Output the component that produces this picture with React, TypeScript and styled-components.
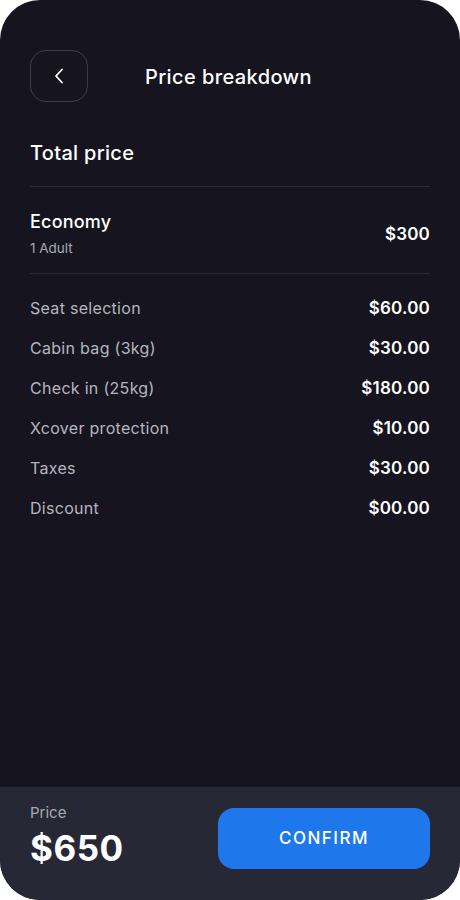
import React from "react";
import styled, { createGlobalStyle } from "styled-components";

const GlobalStyle = createGlobalStyle`
  html, body {
    margin: 0;
    padding: 0;
    background: #ffffff;
  }
  body {
    font-family: "Inter", "Liberation Sans", sans-serif;
  }
`;

const Phone = styled.div`
  width: 460px;
  height: 900px;
  border-radius: 40px;
  overflow: hidden;
  background: #16151f;
  display: flex;
  flex-direction: column;
  color: #ffffff;
`;

const Content = styled.div`
  flex: 1;
  padding: 50px 30px 0;
  display: flex;
  flex-direction: column;
`;

const Header = styled.div`
  display: flex;
  align-items: center;
  gap: 57px;
  margin-bottom: 38px;
`;

const BackButton = styled.button`
  width: 58px;
  height: 52px;
  border-radius: 16px;
  border: 1px solid #3a3a4a;
  background: transparent;
  color: #ffffff;
  display: flex;
  align-items: center;
  justify-content: center;
  padding: 0;
`;

const Title = styled.h1`
  margin: 0;
  padding-top: 2px;
  font-size: 20px;
  font-weight: 500;
  letter-spacing: 0.4px;
`;

const SectionTitle = styled.h2`
  margin: 0;
  font-size: 20px;
  font-weight: 500;
  letter-spacing: 0.3px;
  line-height: 26px;
  padding-bottom: 20px;
  border-bottom: 1px solid #2a2936;
`;

const Fare = styled.div`
  display: flex;
  align-items: center;
  justify-content: space-between;
  padding: 24px 0 17px;
  border-bottom: 1px solid #2a2936;
`;

const FareInfo = styled.div`
  display: flex;
  flex-direction: column;
  gap: 8px;
`;

const FareName = styled.div`
  font-size: 18px;
  font-weight: 500;
  letter-spacing: 0.2px;
`;

const FareSub = styled.div`
  font-size: 13.5px;
  color: #a9a9b3;
`;

const Amount = styled.div`
  font-size: 17px;
  font-weight: 600;
  letter-spacing: 0.2px;
`;

const List = styled.div`
  display: flex;
  flex-direction: column;
  gap: 18px;
  padding-top: 23px;
`;

const Row = styled.div`
  display: flex;
  justify-content: space-between;
  align-items: center;
  height: 22px;
`;

const Label = styled.span`
  font-size: 16px;
  letter-spacing: 0.3px;
  color: #b5b5be;
`;

const Footer = styled.div`
  height: 113px;
  background: #262836;
  display: flex;
  align-items: flex-start;
  justify-content: space-between;
  padding: 17px 30px 0;
  box-sizing: border-box;
`;

const Total = styled.div`
  display: flex;
  flex-direction: column;
  gap: 6px;
`;

const TotalLabel = styled.div`
  font-size: 15px;
  line-height: 18px;
  color: #a9a9b3;
`;

const TotalValue = styled.div`
  font-size: 35px;
  line-height: 40px;
  font-weight: 700;
  letter-spacing: 0.5px;
`;

const ConfirmButton = styled.button`
  margin-top: 4px;
  width: 212px;
  height: 61px;
  border: none;
  border-radius: 16px;
  background: #1f78eb;
  color: #ffffff;
  font-family: inherit;
  font-size: 17px;
  font-weight: 500;
  letter-spacing: 1.5px;
  padding: 0 0 2px;
`;

const items = [
  { label: "Seat selection", amount: "$60.00" },
  { label: "Cabin bag (3kg)", amount: "$30.00" },
  { label: "Check in (25kg)", amount: "$180.00" },
  { label: "Xcover protection", amount: "$10.00" },
  { label: "Taxes", amount: "$30.00" },
  { label: "Discount", amount: "$00.00" },
];

export default function App() {
  return (
    <>
      <GlobalStyle />
      <Phone>
        <Content>
          <Header>
            <BackButton aria-label="Back">
              <svg width="10" height="16" viewBox="0 0 10 16" fill="none">
                <path
                  d="M8 1.5L2 8l6 6.5"
                  stroke="#ffffff"
                  strokeWidth="1.8"
                  strokeLinecap="round"
                  strokeLinejoin="round"
                />
              </svg>
            </BackButton>
            <Title>Price breakdown</Title>
          </Header>
          <SectionTitle>Total price</SectionTitle>
          <Fare>
            <FareInfo>
              <FareName>Economy</FareName>
              <FareSub>1 Adult</FareSub>
            </FareInfo>
            <Amount>$300</Amount>
          </Fare>
          <List>
            {items.map((item) => (
              <Row key={item.label}>
                <Label>{item.label}</Label>
                <Amount>{item.amount}</Amount>
              </Row>
            ))}
          </List>
        </Content>
        <Footer>
          <Total>
            <TotalLabel>Price</TotalLabel>
            <TotalValue>$650</TotalValue>
          </Total>
          <ConfirmButton>CONFIRM</ConfirmButton>
        </Footer>
      </Phone>
    </>
  );
}
